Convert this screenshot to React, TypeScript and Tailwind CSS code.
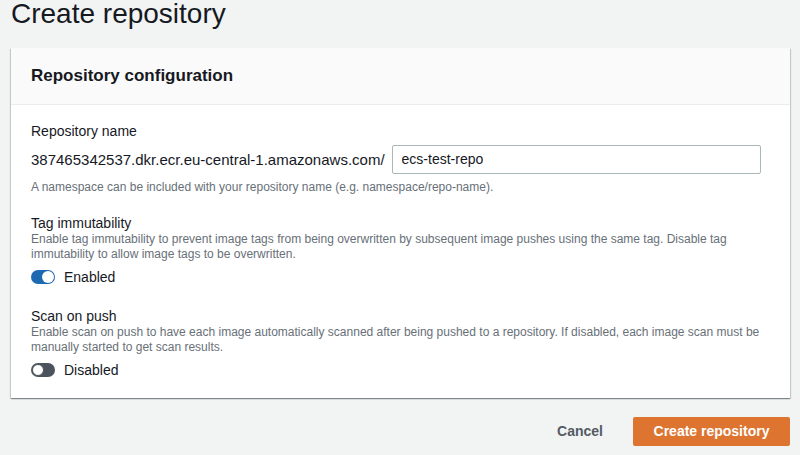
export default function App() {
  return (
    <div
      className="min-h-[455px] w-[800px] bg-[#f2f3f3] text-[#16191f] overflow-hidden"
      style={{ fontFamily: '"Liberation Sans", Arial, sans-serif' }}
    >
      <h1 className="pl-[11px] text-[28px] leading-[28px] font-normal">Create repository</h1>

      <div className="ml-[11px] mr-[10px] mt-[20px] bg-white shadow-[0_1px_1px_0_rgba(0,28,36,0.3),1px_1px_1px_0_rgba(0,28,36,0.15),-1px_1px_1px_0_rgba(0,28,36,0.15)]">
        <div className="h-[57px] bg-[#fafafa] border-b border-[#eaeded] pl-[20px] flex items-center">
          <h2 className="text-[17px] leading-[20px] font-bold">Repository configuration</h2>
        </div>

        <div className="pl-[20px] pr-[29px] pt-[16px] pb-[18px]">
          <div className="text-[14px] leading-[20px]">Repository name</div>
          <div className="mt-[4px] flex items-center">
            <span className="text-[15px] leading-[20px] mr-[7px]">387465342537.dkr.ecr.eu-central-1.amazonaws.com/</span>
            <div className="flex-1 h-[29px] border border-[#aab7b8] rounded-[2px] flex items-center pl-[9px] text-[14px]">
              ecs-test-repo
            </div>
          </div>
          <div className="mt-[5px] text-[12px] leading-[16px] text-[#687078]">
            A namespace can be included with your repository name (e.g. namespace/repo-name).
          </div>

          <div className="mt-[19px] text-[14px] leading-[18px]">Tag immutability</div>
          <div className="text-[12px] leading-[15px] text-[#687078]">
            Enable tag immutability to prevent image tags from being overwritten by subsequent image pushes using the same tag. Disable tag immutability to allow image tags to be overwritten.
          </div>
          <div className="mt-[5px] flex items-center">
            <span className="w-[24px] h-[14px] rounded-full bg-[#1d6ab3] relative">
              <span className="absolute right-[1px] top-[1px] w-[12px] h-[12px] rounded-full bg-white" />
            </span>
            <span className="ml-[9px] text-[14px] leading-[20px]">Enabled</span>
          </div>

          <div className="mt-[20px] text-[14px] leading-[18px]">Scan on push</div>
          <div className="text-[12px] leading-[15px] text-[#687078]">
            Enable scan on push to have each image automatically scanned after being pushed to a repository. If disabled, each image scan must be manually started to get scan results.
          </div>
          <div className="mt-[5px] flex items-center">
            <span className="w-[24px] h-[14px] rounded-full bg-[#4b535c] relative">
              <span className="absolute left-[1px] top-[1px] w-[12px] h-[12px] rounded-full bg-white border border-[#4b535c]" />
            </span>
            <span className="ml-[9px] text-[14px] leading-[20px]">Disabled</span>
          </div>
        </div>
      </div>

      <div className="mt-[19px] mr-[10px] flex justify-end items-center">
        <button className="text-[14px] font-bold text-[#545b64] px-[20px] h-[29px]">Cancel</button>
        <button className="ml-[10px] w-[157px] h-[29px] rounded-[2px] bg-[#dd7530] text-white text-[14px] font-bold">
          Create repository
        </button>
      </div>
    </div>
  );
}
